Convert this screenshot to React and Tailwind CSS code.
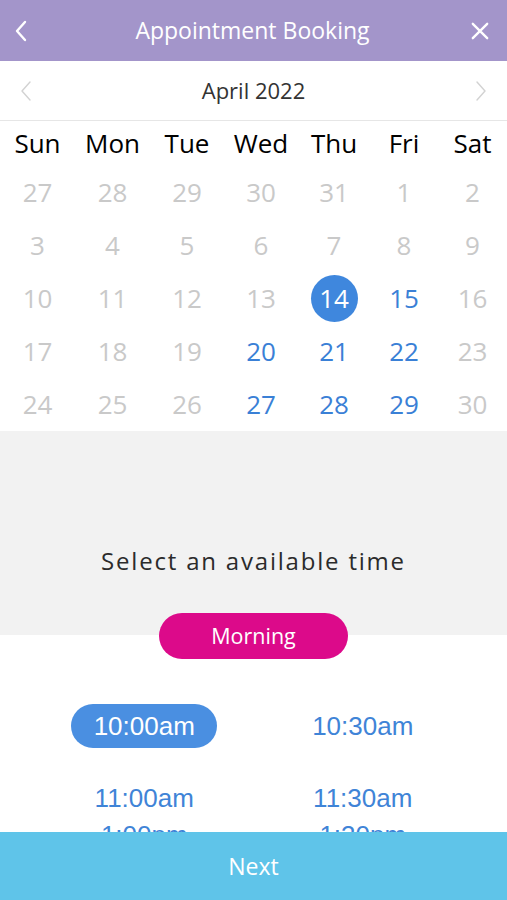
import React from "react";

// ─── Icons ────────────────────────────────────────────────────────────────

function Chevron({ dir = "left", className = "", size = 22, stroke = 2.4 }) {
  const d = dir === "left" ? "M15 3 L7 12 L15 21" : "M9 3 L17 12 L9 21";
  return (
    <svg width={size} height={size} viewBox="0 0 24 24" fill="none" className={className} aria-hidden="true">
      <path d={d} stroke="currentColor" strokeWidth={stroke} strokeLinecap="round" strokeLinejoin="round" />
    </svg>
  );
}

function CloseIcon() {
  return (
    <svg width="20" height="20" viewBox="0 0 20 20" fill="none" aria-hidden="true">
      <path d="M2 2 L18 18 M18 2 L2 18" stroke="currentColor" strokeWidth="2.6" strokeLinecap="round" />
    </svg>
  );
}

// ─── Data ─────────────────────────────────────────────────────────────────

const DAYS = ["Sun", "Mon", "Tue", "Wed", "Thu", "Fri", "Sat"];

// n = number, s = state: "off" | "open" | "sel"
const WEEKS = [
  [27, 28, 29, 30, 31, 1, 2].map((n) => ({ n, s: "off" })),
  [3, 4, 5, 6, 7, 8, 9].map((n) => ({ n, s: "off" })),
  [
    { n: 10, s: "off" }, { n: 11, s: "off" }, { n: 12, s: "off" }, { n: 13, s: "off" },
    { n: 14, s: "sel" }, { n: 15, s: "open" }, { n: 16, s: "off" },
  ],
  [
    { n: 17, s: "off" }, { n: 18, s: "off" }, { n: 19, s: "off" }, { n: 20, s: "open" },
    { n: 21, s: "open" }, { n: 22, s: "open" }, { n: 23, s: "off" },
  ],
  [
    { n: 24, s: "off" }, { n: 25, s: "off" }, { n: 26, s: "off" }, { n: 27, s: "open" },
    { n: 28, s: "open" }, { n: 29, s: "open" }, { n: 30, s: "off" },
  ],
];

const GRID = "grid grid-cols-[75px_75px_74px_74px_72px_68px_69px]";

function DayCell({ n, s }) {
  if (s === "sel") {
    return (
      <div className="flex items-center justify-center">
        <span className="w-[47px] h-[47px] rounded-full bg-[#3f87dd] text-white flex items-center justify-center text-[26px]">
          {n}
        </span>
      </div>
    );
  }
  return (
    <div
      className={`flex items-center justify-center text-[26px] ${
        s === "open" ? "text-[#3a80d6]" : "text-[#c9c9c9]"
      }`}
    >
      {n}
    </div>
  );
}

function TimeSlot({ label, active }) {
  return (
    <div className="flex items-center justify-center">
      {active ? (
        <span className="w-[146px] h-[44px] rounded-full bg-[#4a8fe1] text-white flex items-center justify-center">
          {label}
        </span>
      ) : (
        <span className="text-[#3f84d7]">{label}</span>
      )}
    </div>
  );
}

export default function App() {
  return (
    <div
      className="w-[507px] h-[900px] flex flex-col bg-white overflow-hidden"
      style={{ fontFamily: "'Open Sans', sans-serif" }}
    >
      {/* ── Header ─────────────────────────────── */}
      <div className="h-[61px] shrink-0 bg-[#a395ca] flex items-center justify-between pl-[10px] pr-[12px] text-white">
        <Chevron dir="left" size={24} stroke={2.4} />
        <span className="text-[23px]">Appointment Booking</span>
        <span className="w-[24px] flex justify-end pr-[6px]">
          <CloseIcon />
        </span>
      </div>

      {/* ── Month bar ──────────────────────────── */}
      <div className="h-[60px] shrink-0 flex items-center justify-between px-[15px] border-b border-[#e6e6e6]">
        <Chevron dir="left" className="text-[#d2d2d2]" size={24} stroke={1.4} />
        <span className="text-[22px] text-[#333]">April 2022</span>
        <Chevron dir="right" className="text-[#d2d2d2]" size={24} stroke={1.4} />
      </div>

      {/* ── Calendar ───────────────────────────── */}
      <div className="shrink-0">
        <div className={`${GRID} h-[45px] items-center`}>
          {DAYS.map((d) => (
            <div key={d} className="text-center text-[26px] text-black">
              {d}
            </div>
          ))}
        </div>
        {WEEKS.map((w, i) => (
          <div key={i} className={`${GRID} h-[53px]`}>
            {w.map((c, j) => (
              <DayCell key={j} {...c} />
            ))}
          </div>
        ))}
      </div>

      {/* ── Time selection ─────────────────────── */}
      <div className="flex-1 min-h-0 overflow-hidden">
        <div className="h-[204px] bg-[#f2f2f2] flex items-end justify-center pb-[56px]">
          <span className="text-[24px] text-[#2b2b2b] tracking-[1.8px]">Select an available time</span>
        </div>
        <div className="flex justify-center -mt-[22px]">
          <span className="w-[189px] h-[46px] rounded-full bg-[#dc0a8a] text-white text-[21.5px] flex items-center justify-center">
            Morning
          </span>
        </div>

        <div
          className="px-[35px] pt-[45px] text-[26px]"
          style={{ fontFamily: "'Liberation Sans', Arial, sans-serif" }}
        >
          <div className="grid grid-cols-2 h-[44px]">
            <TimeSlot label="10:00am" active />
            <TimeSlot label="10:30am" />
          </div>
          <div className="grid grid-cols-2 h-[44px] mt-[28px]">
            <TimeSlot label="11:00am" />
            <TimeSlot label="11:30am" />
          </div>
          <div className="grid grid-cols-2 h-[30px] leading-[30px]">
            <TimeSlot label="1:00pm" />
            <TimeSlot label="1:30pm" />
          </div>
        </div>
      </div>

      {/* ── Next ───────────────────────────────── */}
      <button
        type="button"
        className="h-[68px] shrink-0 bg-[#5fc4e9] text-white text-[23px] flex items-center justify-center"
      >
        Next
      </button>
    </div>
  );
}
